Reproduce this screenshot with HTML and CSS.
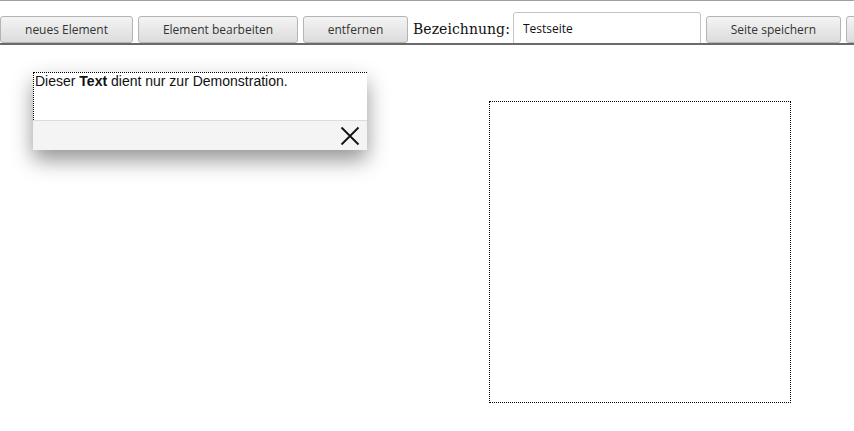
FILE: index.html
```html
<!DOCTYPE html>
<html lang="de">
<head>
<meta charset="utf-8">
<title>Testseite</title>
<link rel="stylesheet" href="styles.css">
</head>
<body>
<div class="toolbar">
  <button class="btn w1">neues Element</button>
  <button class="btn w2">Element bearbeiten</button>
  <button class="btn w3">entfernen</button>
  <label class="label" for="name">Bezeichnung:</label>
  <input id="name" class="input" type="text" value="Testseite">
  <button class="btn w4">Seite speichern</button>
  <button class="btn w5" title="Seite laden" aria-label="Seite laden"></button>
</div>
<div class="canvas">
  <div class="dialog">
    <div class="dialog-body">Dieser <b>Text</b> dient nur zur Demonstration.</div>
    <div class="dialog-foot">
      <svg class="close" width="20" height="20" viewBox="0 0 20 20"><path d="M1.5 1.5 L18.5 18.5 M18.5 1.5 L1.5 18.5" stroke="#111" stroke-width="1.8" fill="none"/></svg>
    </div>
  </div>
  <div class="frame"></div>
</div>
</body>
</html>
```
FILE: styles.css
```css
html, body {
  margin: 0;
  padding: 0;
  background: #fff;
  overflow: hidden;
}
body {
  border-top: 1px solid #a0a0a0;
  width: 854px;
  height: 430px;
  font-family: "Liberation Sans", Arial, sans-serif;
}
.toolbar {
  display: flex;
  align-items: flex-end;
  gap: 5px;
  height: 42px;
  border-bottom: 2px solid #6a6a6a;
  white-space: nowrap;
  overflow: hidden;
}
.btn {
  flex: none;
  height: 27px;
  margin: 0;
  padding: 0;
  border: 1px solid #b4b4b4;
  border-radius: 3px;
  background: linear-gradient(#f4f4f4, #dcdcdc);
  font-family: "Open Sans", sans-serif;
  font-size: 12px;
  color: #333;
  box-sizing: border-box;
}
.w1 { width: 133px; }
.w2 { width: 160px; }
.w3 { width: 105px; }
.w4 { width: 135px; }
.w5 { width: 120px; }
.label {
  flex: none;
  font-family: "DejaVu Serif", serif;
  font-size: 14px;
  letter-spacing: 0.05px;
  color: #111;
  align-self: center;
  margin-top: 14px;
  margin-right: -2px;
}
.input {
  flex: none;
  width: 188px;
  height: 33px;
  margin-bottom: -2px;
  box-sizing: border-box;
  border: 1px solid #c4c4c4;
  border-radius: 3px;
  padding: 0 9px;
  font-family: "Open Sans", sans-serif;
  font-size: 12px;
  color: #111;
  background: #fff;
}
.canvas {
  position: relative;
  height: 386px;
}
.dialog {
  position: absolute;
  left: 33px;
  top: 27px;
  width: 334px;
  background: #fff;
  box-shadow: 0 10px 20px rgba(0,0,0,0.42);
}
.dialog-body {
  height: 47px;
  border-top: 1px dotted #000;
  border-left: 1px dotted #000;
  padding: 0 1px;
  font-size: 14px;
  line-height: 17px;
  color: #111;
}
.dialog-foot {
  height: 29px;
  background: #f4f4f4;
  border-top: 1px solid #dcdcdc;
  display: flex;
  justify-content: flex-end;
  align-items: center;
  padding-right: 7px;
}
.close { display: block; margin-top: 1px; }
.frame {
  position: absolute;
  left: 489px;
  top: 56px;
  width: 302px;
  height: 302px;
  box-sizing: border-box;
  border: 1px dotted #000;
}
```
